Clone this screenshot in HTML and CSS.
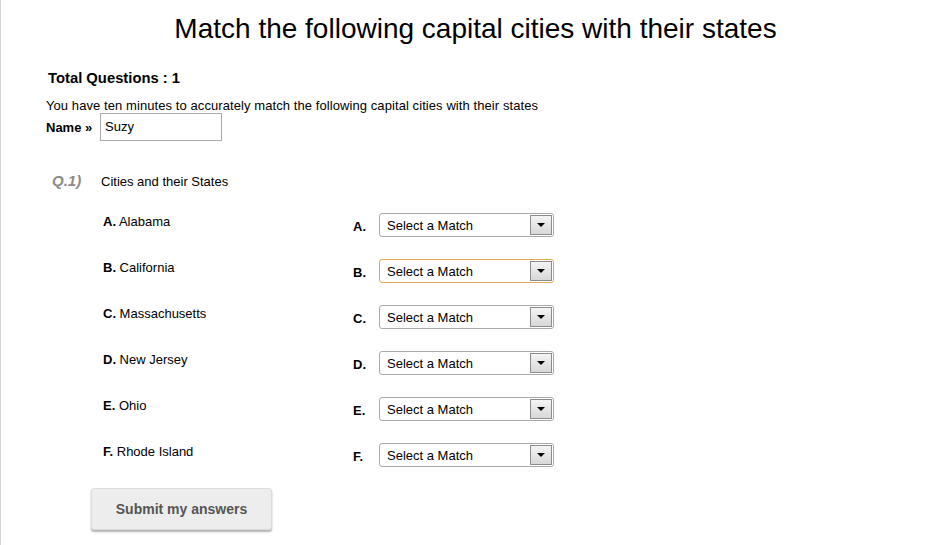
FILE: index.html
```html
<!DOCTYPE html>
<html>
<head>
<meta charset="utf-8">
<link rel="stylesheet" href="styles.css">
</head>
<body>
<div class="page">
  <h1 class="title">Match the following capital cities with their states</h1>
  <div class="total">Total Questions : 1</div>
  <p class="intro">You have ten minutes to accurately match the following capital cities with their states</p>
  <div class="name-row">
    <label class="name-label">Name »</label>
    <div class="name-input">Suzy</div>
  </div>
  <div class="question">
    <span class="qnum">Q.1)</span>
    <span class="qtext">Cities and their States</span>
  </div>
  <div class="matches">
    <div class="row">
      <div class="city"><b>A.</b> Alabama</div>
      <div class="pick"><span class="plabel">A.</span><div class="select"><span>Select a Match</span><i class="arrow"></i></div></div>
    </div>
    <div class="row">
      <div class="city"><b>B.</b> California</div>
      <div class="pick"><span class="plabel">B.</span><div class="select focus"><span>Select a Match</span><i class="arrow"></i></div></div>
    </div>
    <div class="row">
      <div class="city"><b>C.</b> Massachusetts</div>
      <div class="pick"><span class="plabel">C.</span><div class="select"><span>Select a Match</span><i class="arrow"></i></div></div>
    </div>
    <div class="row">
      <div class="city"><b>D.</b> New Jersey</div>
      <div class="pick"><span class="plabel">D.</span><div class="select"><span>Select a Match</span><i class="arrow"></i></div></div>
    </div>
    <div class="row">
      <div class="city"><b>E.</b> Ohio</div>
      <div class="pick"><span class="plabel">E.</span><div class="select"><span>Select a Match</span><i class="arrow"></i></div></div>
    </div>
    <div class="row">
      <div class="city"><b>F.</b> Rhode Island</div>
      <div class="pick"><span class="plabel">F.</span><div class="select"><span>Select a Match</span><i class="arrow"></i></div></div>
    </div>
  </div>
  <div class="actions">
    <button class="submit">Submit my answers</button>
  </div>
</div>
</body>
</html>
```
FILE: styles.css
```css
html, body {
  margin: 0;
  padding: 0;
  background: #fff;
}
body {
  font-family: "Liberation Sans", Arial, sans-serif;
  color: #000;
}
.page {
  border-left: 1px solid #d4d4d4;
  box-sizing: border-box;
  width: 950px;
  height: 545px;
  overflow: hidden;
}
.title {
  margin: 0;
  padding-top: 12px;
  height: 34px;
  font-size: 28px;
  line-height: 34px;
  font-weight: normal;
  text-align: center;
  color: #000;
}
.total {
  margin: 23px 0 0 47px;
  font-size: 14.8px;
  font-weight: bold;
  line-height: 18px;
}
.intro {
  margin: 11px 0 0 45px;
  font-size: 13px;
  letter-spacing: 0.08px;
  line-height: 15px;
}
.name-row {
  display: flex;
  align-items: center;
  margin-left: 45px;
  margin-top: 0;
}
.name-label {
  font-size: 13px;
  font-weight: bold;
  width: 54px;
}
.name-input {
  width: 116px;
  height: 26px;
  border: 1px solid #aaa;
  box-sizing: content-box;
  padding-left: 4px;
  font-size: 13px;
  line-height: 26px;
}
.question {
  display: flex;
  align-items: baseline;
  margin: 31px 0 0 51px;
}
.qnum {
  width: 49px;
  font-size: 15px;
  font-weight: bold;
  font-style: italic;
  color: #8a8a8a;
}
.qtext {
  font-size: 13px;
}
.matches {
  margin-top: 24px;
  margin-left: 102px;
}
.row {
  display: flex;
  height: 46px;
}
.city {
  width: 250px;
  font-size: 13px;
  line-height: 16px;
  margin-top: 1px;
}
.pick {
  display: flex;
  align-items: center;
  height: 24px;
}
.plabel {
  width: 26px;
  font-size: 13px;
  font-weight: bold;
  padding-top: 2px;
}
.select {
  position: relative;
  height: 22px;
  border: 1px solid #a9a9a9;
  border-radius: 3px;
  display: flex;
  align-items: center;
  font-size: 13px;
  padding-left: 7px;
  box-sizing: content-box;
  width: 166px;
}
.select.focus {
  border-color: #e1a955;
}
.arrow {
  position: absolute;
  right: 1px;
  top: 1px;
  width: 20px;
  height: 18px;
  border: 1px solid #8c8c8c;
  background: linear-gradient(#f4f4f4, #d8d8d8);
}
.arrow::after {
  content: "";
  position: absolute;
  left: 6px;
  top: 7px;
  border-left: 4px solid transparent;
  border-right: 4px solid transparent;
  border-top: 4px solid #000;
}
.actions {
  margin-left: 90px;
  margin-top: -1px;
}
.submit {
  width: 181px;
  height: 42px;
  background: #ededed;
  border: 1px solid #dcdcdc;
  border-radius: 3px;
  box-shadow: 0 2px 2px rgba(0,0,0,0.3);
  font-family: "Liberation Sans", Arial, sans-serif;
  font-size: 14px;
  font-weight: bold;
  color: #555;
}
```
